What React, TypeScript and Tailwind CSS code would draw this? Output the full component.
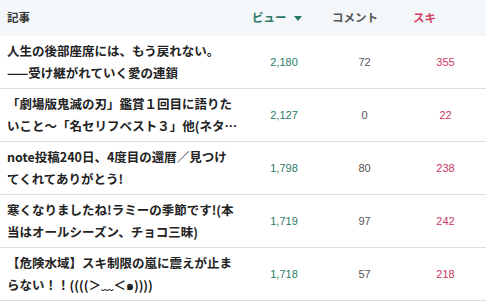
import { memo } from 'react'

type Row = {
  lines: [string, string]
  views: string
  comments: string
  likes: string
}

const rows: Row[] = [
  {
    lines: ['人生の後部座席には、もう戻れない。', '——受け継がれていく愛の連鎖'],
    views: '2,180',
    comments: '72',
    likes: '355',
  },
  {
    lines: ['「劇場版鬼滅の刃」鑑賞１回目に語りた', 'いこと～「名セリフベスト３」他(ネタバレあり)'],
    views: '2,127',
    comments: '0',
    likes: '22',
  },
  {
    lines: ['note投稿240日、4度目の還暦／見つけ', 'てくれてありがとう!'],
    views: '1,798',
    comments: '80',
    likes: '238',
  },
  {
    lines: ['寒くなりましたね!ラミーの季節です!(本', '当はオールシーズン、チョコ三昧)'],
    views: '1,719',
    comments: '97',
    likes: '242',
  },
  {
    lines: ['【危険水域】スキ制限の嵐に震えが止ま', 'らない！！((((＞﹏＜๑))))'],
    views: '1,718',
    comments: '57',
    likes: '218',
  },
]

const cols = 'grid grid-cols-[244px_80px_81px_81px]'
const jp = 'font-["Noto_Sans_CJK_JP",sans-serif]'

const App = memo(() => {
  return (
    <div className="w-[492px] h-[304px] bg-white overflow-hidden">
      <div className="w-[486px]">
        {/* Header */}
        <div className={`${cols} h-[36px] items-center bg-[#f4f7f9] text-[11.5px] font-bold ${jp}`}>
          <div className="pl-[7px] text-[#333]">記事</div>
          <div className="pl-2 flex items-center text-[#2b7a67]">
            ビュー
            <svg className="ml-[7px] w-[8px] h-[5px]" viewBox="0 0 8 5">
              <path d="M0 0h8L4 5z" fill="#2b7a67" />
            </svg>
          </div>
          <div className="pl-2 text-[#555]">コメント</div>
          <div className="pl-2 text-[#d23e64]">スキ</div>
        </div>

        {/* Rows */}
        {rows.map((row) => (
          <div key={row.views} className={`${cols} items-center border-b border-[#dedede] py-[4px]`}>
            <div
              className={`min-w-0 overflow-hidden pl-[7px] pr-[4px] text-[12.5px] leading-[22px] font-bold text-[#222] ${jp}`}
            >
              <div className="whitespace-nowrap overflow-hidden">{row.lines[0]}</div>
              <div className="whitespace-nowrap overflow-hidden text-ellipsis">{row.lines[1]}</div>
            </div>
            <div className="text-center text-[11px] text-[#2a7b66] font-['Liberation_Sans',sans-serif]">
              {row.views}
            </div>
            <div className="text-center text-[11px] text-[#555] font-['Liberation_Sans',sans-serif]">
              {row.comments}
            </div>
            <div className="text-center text-[11px] text-[#c9375e] font-['Liberation_Sans',sans-serif]">
              {row.likes}
            </div>
          </div>
        ))}
      </div>
    </div>
  )
})

App.displayName = 'App'

export default App
